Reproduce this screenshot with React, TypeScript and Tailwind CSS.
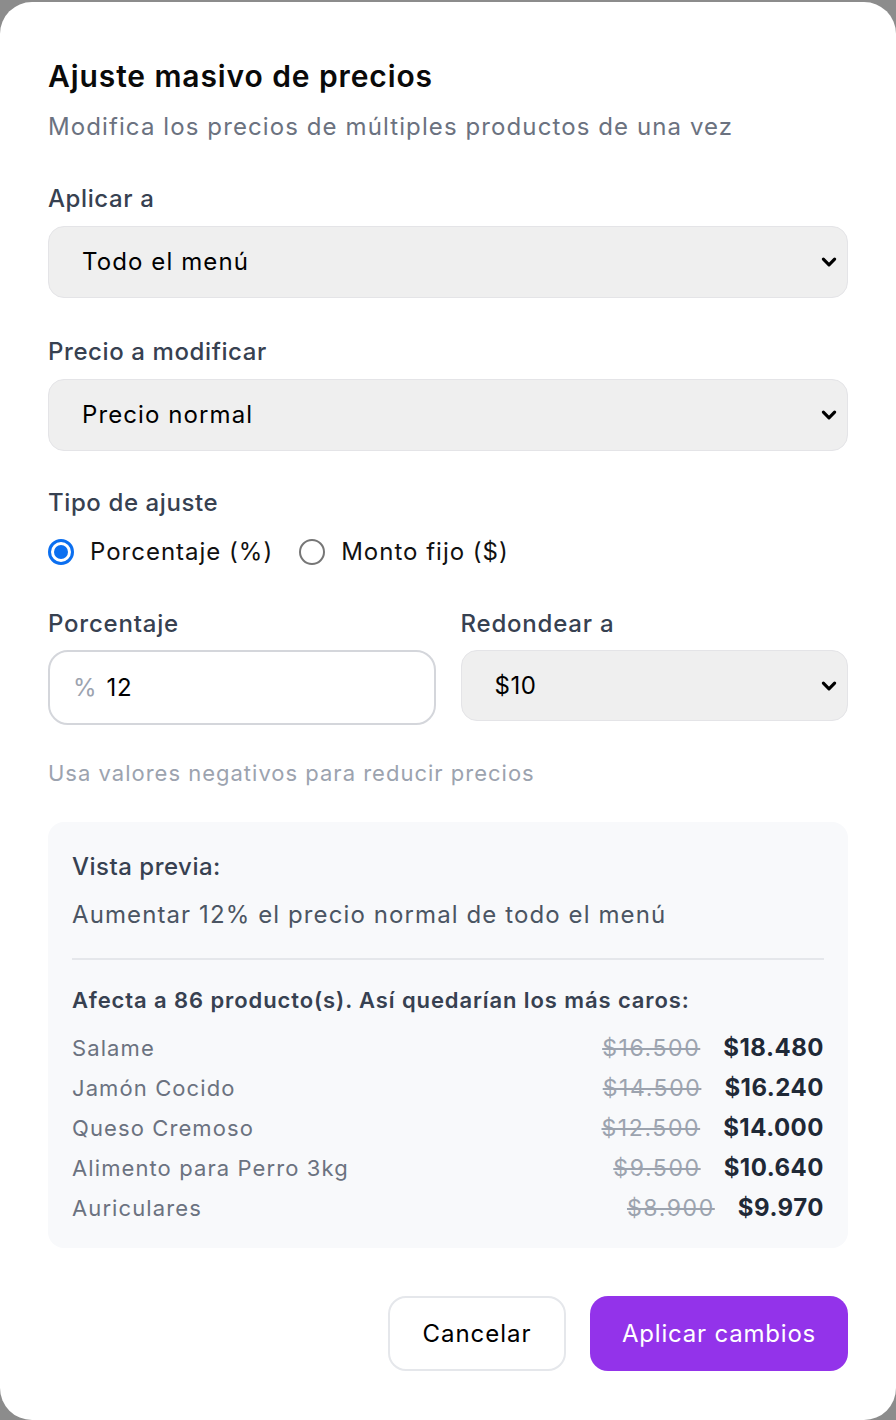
import React, { useState } from 'react';

const PRODUCTS = [
  { name: 'Salame', old: '$16.500', next: '$18.480' },
  { name: 'Jamón Cocido', old: '$14.500', next: '$16.240' },
  { name: 'Queso Cremoso', old: '$12.500', next: '$14.000' },
  { name: 'Alimento para Perro 3kg', old: '$9.500', next: '$10.640' },
  { name: 'Auriculares', old: '$8.900', next: '$9.970' },
];

function Chevron() {
  return (
    <svg className="pointer-events-none absolute right-[10px] top-1/2 -translate-y-1/2" width="18" height="18" viewBox="0 0 16 16" fill="none">
      <path d="M3 5.5l5 5 5-5" stroke="#000" strokeWidth="2.8" strokeLinecap="round" strokeLinejoin="round" />
    </svg>
  );
}

function SelectBox({ value, options, className = '' }: { value: string; options: string[]; className?: string }) {
  return (
    <div className={`relative ${className}`}>
      <select
        defaultValue={value}
        className="w-full h-[72px] appearance-none rounded-[16px] border border-[#e4e4e7] bg-[#efefef] pl-[33px] pr-12 text-[24px] tracking-[1.1px] text-black outline-none"
      >
        {options.map((o) => <option key={o}>{o}</option>)}
      </select>
      <Chevron />
    </div>
  );
}

function Radio({ checked, label, onClick }: { checked: boolean; label: string; onClick: () => void }) {
  return (
    <button type="button" onClick={onClick} className="flex items-center gap-[16px]">
      {checked ? (
        <span className="flex h-[26px] w-[26px] items-center justify-center rounded-full border-[3px] border-[#0b6ff0] bg-white">
          <span className="h-[14px] w-[14px] rounded-full bg-[#0b6ff0]" />
        </span>
      ) : (
        <span className="h-[26px] w-[26px] rounded-full border-2 border-[#767676] bg-white" />
      )}
      <span className="text-[24px] tracking-[1px] text-[#111]">{label}</span>
    </button>
  );
}

export default function App() {
  const [tipo, setTipo] = useState<'pct' | 'fijo'>('pct');

  return (
    <div className="h-[1420px] w-[896px] bg-[#8c8c8c] pt-[2px]" style={{ fontFamily: 'Inter, "Noto Sans", sans-serif' }}>
      <div className="h-[1418px] rounded-[32px] bg-white px-[48px] pt-[52px]">
        <h1 className="text-[30px] font-semibold leading-[44px] tracking-[0.9px] text-[#0a0a0a]">Ajuste masivo de precios</h1>
        <p className="mt-[13px] text-[24px] leading-[32px] tracking-[1.1px] text-[#6b7280]">Modifica los precios de múltiples productos de una vez</p>

        <label className="mt-[40px] block text-[24px] font-medium leading-[32px] tracking-[0.6px] text-[#374151]">Aplicar a</label>
        <SelectBox className="mt-[11px]" value="Todo el menú" options={['Todo el menú', 'Una categoría']} />

        <label className="mt-[38px] block text-[24px] font-medium leading-[32px] tracking-[0.6px] text-[#374151]">Precio a modificar</label>
        <SelectBox className="mt-[11px]" value="Precio normal" options={['Precio normal', 'Precio oferta']} />

        <label className="mt-[36px] block text-[24px] font-medium leading-[32px] tracking-[0.6px] text-[#374151]">Tipo de ajuste</label>
        <div className="mt-[15px] flex items-center gap-[26px]">
          <Radio checked={tipo === 'pct'} label="Porcentaje (%)" onClick={() => setTipo('pct')} />
          <Radio checked={tipo === 'fijo'} label="Monto fijo ($)" onClick={() => setTipo('fijo')} />
        </div>

        <div className="mt-[38px] grid grid-cols-2 gap-[25px]">
          <div>
            <label className="block text-[24px] font-medium leading-[32px] tracking-[0.8px] text-[#374151]">Porcentaje</label>
            <div className="mt-[10px] flex h-[75px] items-center rounded-[20px] border-2 border-[#d4d6db] bg-white pl-[23px]">
              <span className="text-[24px] text-[#9ca3af]">%</span>
              <input defaultValue="12" className="ml-[10px] w-full bg-transparent text-[24px] tracking-[0.6px] text-black outline-none" />
            </div>
          </div>
          <div>
            <label className="block text-[24px] font-medium leading-[32px] tracking-[0.8px] text-[#374151]">Redondear a</label>
            <div className="relative mt-[10px]">
              <select defaultValue="$10" className="w-full h-[71px] appearance-none rounded-[16px] border border-[#e4e4e7] bg-[#efefef] pl-[33px] pr-12 text-[24px] tracking-[0.6px] text-black outline-none">
                <option>$1</option>
                <option>$10</option>
                <option>$100</option>
              </select>
              <Chevron />
            </div>
          </div>
        </div>

        <p className="mt-[32px] text-[22px] leading-[32px] tracking-[1px] text-[#9ca3af]">Usa valores negativos para reducir precios</p>

        <div className="mt-[33px] rounded-[16px] bg-[#f8f9fb] px-[24px] pt-[28px] pb-[20px]">
          <p className="text-[24px] font-medium leading-[34px] tracking-[0.5px] text-[#374151]">Vista previa:</p>
          <p className="mt-[14px] text-[24px] leading-[34px] tracking-[1.1px] text-[#4b5563]">Aumentar 12% el precio normal de todo el menú</p>
          <div className="mt-[26px] border-t-2 border-[#e5e7eb]" />
          <p className="mt-[24px] text-[22px] font-semibold leading-[32px] tracking-[0.9px] text-[#374151]">Afecta a 86 producto(s). Así quedarían los más caros:</p>
          <div className="mt-[12px] flex flex-col">
            {PRODUCTS.map((p) => (
              <div key={p.name} className="flex h-[40px] items-center justify-between">
                <span className="text-[22px] tracking-[1.1px] text-[#6b7280]">{p.name}</span>
                <span className="flex items-center gap-[23px]">
                  <span className="text-[23px] tracking-[1.6px] text-[#9ca3af] line-through">{p.old}</span>
                  <span className="text-[24px] font-bold tracking-[0.5px] text-[#1f2937]">{p.next}</span>
                </span>
              </div>
            ))}
          </div>
        </div>

        <div className="mt-[48px] flex justify-end gap-[24px]">
          <button type="button" className="h-[75px] w-[178px] rounded-[18px] border-2 border-[#e5e7eb] bg-white text-[24px] tracking-[1px] text-black">Cancelar</button>
          <button type="button" className="h-[75px] w-[258px] rounded-[18px] bg-[#9333ea] text-[24px] tracking-[0.8px] text-white">Aplicar cambios</button>
        </div>
      </div>
    </div>
  );
}
